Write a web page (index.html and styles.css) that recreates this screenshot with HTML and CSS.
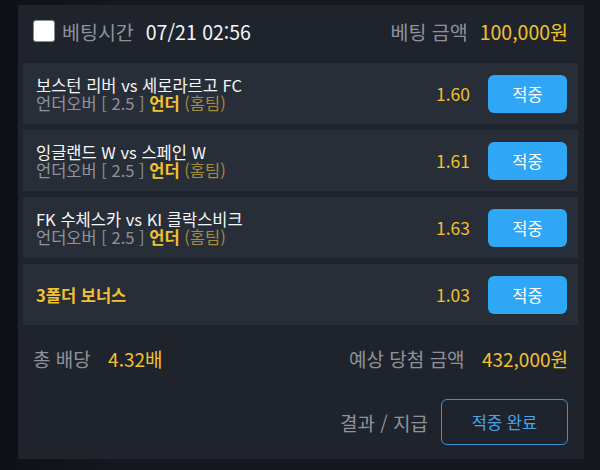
FILE: index.html
```html
<!DOCTYPE html>
<html lang="ko">
<head>
    <meta charset="utf-8">
    <title>베팅 내역</title>
    <link rel="stylesheet" href="styles.css">
</head>
<body>
    <div class="slip">
        <div class="slip-head">
            <div class="head-left">
                <span class="checkbox"></span>
                <span class="label">베팅시간</span>
                <span class="value-white">07/21 02:56</span>
            </div>
            <div class="head-right">
                <span class="label">베팅 금액</span>
                <span class="value-yellow">100,000원</span>
            </div>
        </div>

        <div class="bet-list">
            <div class="bet-row">
                <div class="bet-info">
                    <div class="match">보스턴 리버 vs 세로라르고 FC</div>
                    <div class="pick">언더오버 [ 2.5 ] <b>언더</b> <span class="side">(홈팀)</span></div>
                </div>
                <span class="odds">1.60</span>
                <button class="hit-btn">적중</button>
            </div>
            <div class="bet-row">
                <div class="bet-info">
                    <div class="match">잉글랜드 W vs 스페인 W</div>
                    <div class="pick">언더오버 [ 2.5 ] <b>언더</b> <span class="side">(홈팀)</span></div>
                </div>
                <span class="odds">1.61</span>
                <button class="hit-btn">적중</button>
            </div>
            <div class="bet-row">
                <div class="bet-info">
                    <div class="match">FK 수체스카 vs KI 클락스비크</div>
                    <div class="pick">언더오버 [ 2.5 ] <b>언더</b> <span class="side">(홈팀)</span></div>
                </div>
                <span class="odds">1.63</span>
                <button class="hit-btn">적중</button>
            </div>
            <div class="bet-row">
                <div class="bet-info">
                    <div class="bonus">3폴더 보너스</div>
                </div>
                <span class="odds">1.03</span>
                <button class="hit-btn">적중</button>
            </div>
        </div>

        <div class="summary">
            <div>
                <span class="label">총 배당</span>
                <span class="value-yellow">4.32배</span>
            </div>
            <div>
                <span class="label">예상 당첨 금액</span>
                <span class="value-yellow">432,000원</span>
            </div>
        </div>

        <div class="slip-foot">
            <span class="label">결과 / 지급</span>
            <button class="done-btn">적중 완료</button>
        </div>
    </div>
</body>
</html>
```

FILE: styles.css
```css
:root {
    --page-bg: #14171d;
    --panel-bg: #1f242c;
    --row-bg: #282e38;
    --gray-text: #8e939b;
    --white: #f6f7f8;
    --yellow: #f2c12e;
    --olive: #a38c40;
    --blue: #2fa6f6;
    --blue-line: #3b93d6;
}

body {
    margin: 0;
    width: 600px;
    height: 470px;
    box-sizing: border-box;
    padding: 5px 16px 11px 18px;
    background: linear-gradient(90deg, #0e1015 0%, #15181e 20%, #15181e 100%);
    font-family: "Noto Sans CJK KR", "Noto Sans", sans-serif;
    color: var(--white);
}

.slip {
    background-color: var(--panel-bg);
    height: 454px;
    box-sizing: border-box;
    padding: 0 6px 14px 5px;
    display: flex;
    flex-direction: column;
}

.slip-head {
    height: 52px;
    padding: 0 10px;
    display: flex;
    align-items: center;
    justify-content: space-between;
    font-size: 19.5px;
}

.head-left,
.head-right {
    display: flex;
    align-items: center;
}

.checkbox {
    width: 20px;
    height: 20px;
    background-color: #ffffff;
    border: 1px solid #8a8f96;
    border-radius: 3px;
    margin-right: 7px;
}

.label {
    color: var(--gray-text);
}

.value-white {
    color: var(--white);
    margin-left: 12px;
}

.value-yellow {
    color: var(--yellow);
    margin-left: 12px;
}

.bet-list {
    margin-top: 6px;
    display: flex;
    flex-direction: column;
    gap: 6px;
}

.bet-row {
    height: 61px;
    background-color: var(--row-bg);
    padding: 0 11px 0 13px;
    display: flex;
    align-items: center;
}

.bet-info {
    flex: 1;
    font-size: 16.5px;
    line-height: 18px;
}

.match {
    color: var(--white);
}

.pick {
    color: var(--gray-text);
}

.pick b {
    color: var(--yellow);
    font-weight: 700;
}

.side {
    color: var(--olive);
}

.bonus {
    color: var(--yellow);
    font-weight: 700;
}

.odds {
    color: var(--yellow);
    font-size: 17.5px;
    margin-right: 18px;
}

.hit-btn {
    width: 79px;
    height: 38px;
    border: none;
    border-radius: 6px;
    background-color: var(--blue);
    color: #ffffff;
    font-family: inherit;
    font-size: 16.5px;
    cursor: pointer;
}

.summary {
    margin-top: 20px;
    height: 26px;
    padding: 0 10px;
    display: flex;
    align-items: center;
    justify-content: space-between;
    font-size: 19px;
}

.slip-foot {
    margin-top: 28px;
    padding: 0 10px;
    display: flex;
    align-items: center;
    justify-content: flex-end;
    font-size: 19px;
}

.done-btn {
    margin-left: 13px;
    width: 127px;
    height: 46px;
    background: transparent;
    border: 1.5px solid var(--blue-line);
    border-radius: 6px;
    color: #45a5ea;
    font-family: inherit;
    font-size: 16.5px;
    cursor: pointer;
}
```
